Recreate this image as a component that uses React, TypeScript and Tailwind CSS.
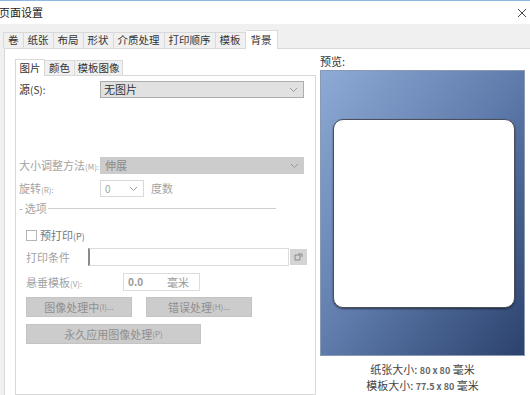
import React from 'react';

const FONT = '"Noto Sans CJK SC", "Noto Sans", sans-serif';

const outerTabs = ['卷', '纸张', '布局', '形状', '介质处理', '打印顺序', '模板'];

const Chevron: React.FC = () => (
    <svg width="9" height="6" viewBox="0 0 9 6" className="shrink-0">
        <polyline points="1,1 4.5,4.5 8,1" fill="none" stroke="#9a9a9a" strokeWidth="1" />
    </svg>
);

const App: React.FC = () => {
    return (
        <div
            className="w-[530px] h-[395px] overflow-hidden bg-[#f0f0f0] text-[11px] text-[#333] flex flex-col"
            style={{ fontFamily: FONT }}
        >
            {/* 标题栏 */}
            <div className="h-[24px] shrink-0 bg-white border-t border-[#8fb8e0] flex items-center justify-between pr-[3px]">
                <span className="leading-none -ml-[1px] text-[#222]">页面设置</span>
                <svg width="10" height="10" viewBox="0 0 10 10">
                    <path d="M1 1 L9 9 M9 1 L1 9" stroke="#444" strokeWidth="1" />
                </svg>
            </div>

            {/* 外层选项卡 */}
            <div className="flex items-end h-[17px] mt-[7px] pl-[3px] shrink-0 text-[10.5px]">
                {outerTabs.map((t, i) => (
                    <div
                        key={t}
                        className={`h-[16px] px-[4px] flex items-center leading-none whitespace-nowrap border-t border-r border-[#d9d9d9] ${i === 0 ? 'border-l' : ''}`}
                    >
                        {t}
                    </div>
                ))}
                <div className="h-[19px] -mb-[1px] px-[5px] flex items-center leading-none bg-white border-t border-r border-[#d9d9d9] relative z-10">
                    背景
                </div>
            </div>

            {/* 外层内容面板 */}
            <div className="ml-[4px] flex-1 bg-white border-l border-t border-[#d9d9d9] flex">
                {/* 左侧 */}
                <div className="pl-[10px] pt-[9px] flex flex-col">
                    <div className="flex items-end h-[17px] text-[10.5px]">
                        <div className="h-[17px] -mb-[1px] w-[30px] flex items-center justify-center leading-none bg-white border border-b-0 border-[#d9d9d9] relative z-10">
                            图片
                        </div>
                        <div className="h-[15px] w-[30px] flex items-center justify-center leading-none bg-[#f0f0f0] border-t border-r border-[#d9d9d9]">
                            颜色
                        </div>
                        <div className="h-[15px] w-[48px] flex items-center justify-center leading-none bg-[#f0f0f0] border-t border-r border-[#d9d9d9]">
                            模板图像
                        </div>
                    </div>
                    <div className="w-[301px] h-[320px] border border-[#d9d9d9] flex flex-col pl-[3px]">
                        {/* 源 */}
                        <div className="flex items-center mt-[5px] h-[17px]">
                            <span className="w-[81px]">源<span className="text-[10px]">(S):</span></span>
                            <div className="w-[204px] h-[17px] bg-[#e1e1e1] border border-[#adadad] flex items-center justify-between pl-[3px] pr-[5px]">
                                <span className="leading-none">无图片</span>
                                <Chevron />
                            </div>
                        </div>

                        {/* 大小调整方法 */}
                        <div className="flex items-center mt-[59px] h-[17px] text-[#a3a3a3]">
                            <span className="w-[81px] whitespace-nowrap">大小调整方法<span className="text-[8px]">(M):</span></span>
                            <div className="w-[204px] h-[17px] bg-[#cccccc] flex items-center justify-between pl-[5px] pr-[5px] text-[#8a8a8a]">
                                <span className="leading-none">伸展</span>
                                <Chevron />
                            </div>
                        </div>

                        {/* 旋转 */}
                        <div className="flex items-center mt-[6px] h-[17px] text-[#a3a3a3]">
                            <span className="w-[81px]">旋转<span className="text-[8px]">(R):</span></span>
                            <div className="w-[44px] h-[17px] bg-white border border-[#d9d9d9] flex items-center justify-between pl-[4px] pr-[5px]">
                                <span className="leading-none text-[10px]">0</span>
                                <Chevron />
                            </div>
                            <span className="ml-[7px]">度数</span>
                        </div>

                        {/* 选项分组 */}
                        <div className="flex items-center mt-[3px] h-[16px] text-[#a3a3a3]">
                            <span className="shrink-0">-</span>
                            <span className="ml-[2px] shrink-0">选项</span>
                            <div className="w-[228px] shrink-0 h-px bg-[#cfcfcf] ml-[1px]" />
                        </div>

                        <div className="pl-[7px] flex flex-col">
                            {/* 预打印 */}
                            <div className="flex items-center mt-[13px] h-[12px]">
                                <div className="w-[11px] h-[11px] border border-[#b5b5b5] bg-white" />
                                <span className="ml-[3px] text-[#777]">预打印<span className="text-[9px]">(P)</span></span>
                            </div>

                            {/* 打印条件 */}
                            <div className="flex items-center mt-[7px] h-[18px] text-[#a3a3a3]">
                                <span className="w-[62px]">打印条件</span>
                                <div className="w-[201px] h-[18px] bg-white border border-[#dcdcdc] border-l-[2px] border-l-[#8a8a8a]" />
                                <div className="w-[17px] h-[16px] ml-[1px] bg-[#d4d4d4] flex items-center justify-center">
                                    <svg width="9" height="8" viewBox="0 0 9 8">
                                        <path d="M1 2 H6 V7 H1 Z" fill="none" stroke="#888" strokeWidth="1" />
                                        <path d="M4 1 H8 V4" fill="none" stroke="#888" strokeWidth="1" />
                                    </svg>
                                </div>
                            </div>

                            {/* 悬垂模板 */}
                            <div className="flex items-center mt-[7px] h-[18px] text-[#a3a3a3]">
                                <span className="w-[97px]">悬垂模板<span className="text-[8px]">(V):</span></span>
                                <div className="w-[77px] h-[18px] bg-white border border-[#dcdcdc] flex items-center pl-[4px]">
                                    <span className="text-[10px] font-bold text-[#9a9a9a] leading-none">0.0</span>
                                    <span className="ml-[24px] text-[#9a9a9a] leading-none">毫米</span>
                                </div>
                            </div>

                            {/* 按钮 */}
                            <div className="flex mt-[6px] gap-[14px]">
                                <div className="w-[106px] h-[20px] bg-[#cccccc] border border-[#c4c4c4] flex items-center justify-center text-[#8f8f8f]">
                                    图像处理中<span className="text-[8px]">(I)...</span>
                                </div>
                                <div className="w-[106px] h-[20px] bg-[#cccccc] border border-[#c4c4c4] flex items-center justify-center text-[#8f8f8f]">
                                    错误处理<span className="text-[8px]">(H)...</span>
                                </div>
                            </div>
                            <div className="flex mt-[7px]">
                                <div className="w-[175px] h-[20px] bg-[#cccccc] border border-[#c4c4c4] flex items-center justify-center text-[#8f8f8f]">
                                    永久应用图像处理<span className="text-[8px]">(P)</span>
                                </div>
                            </div>
                        </div>
                    </div>
                </div>

                {/* 右侧预览 */}
                <div className="ml-[4px] flex flex-col pt-[4px]">
                    <span className="h-[17px] leading-[17px]">预览:</span>
                    <div className="w-[205px] h-[286px] border border-[#8a9ab5] bg-gradient-to-br from-[#8eabd6] via-[#5e7bab] to-[#2c426d] pl-[12px] pr-[9px] pt-[48px] pb-[47px] flex">
                        <div className="flex-1 bg-white rounded-[10px] border border-[#4a4f5a] shadow-[0_1px_2px_rgba(0,0,0,0.5)]" />
                    </div>
                    <div className="flex flex-col items-center mt-[6px] leading-[15px] text-[#444]">
                        <span>纸张大小: <span className="text-[9px] font-bold text-[#666]">80 x 80</span> 毫米</span>
                        <span>模板大小: <span className="text-[9px] font-bold text-[#666]">77.5 x 80</span> 毫米</span>
                    </div>
                </div>
            </div>
        </div>
    );
};

export default App;
